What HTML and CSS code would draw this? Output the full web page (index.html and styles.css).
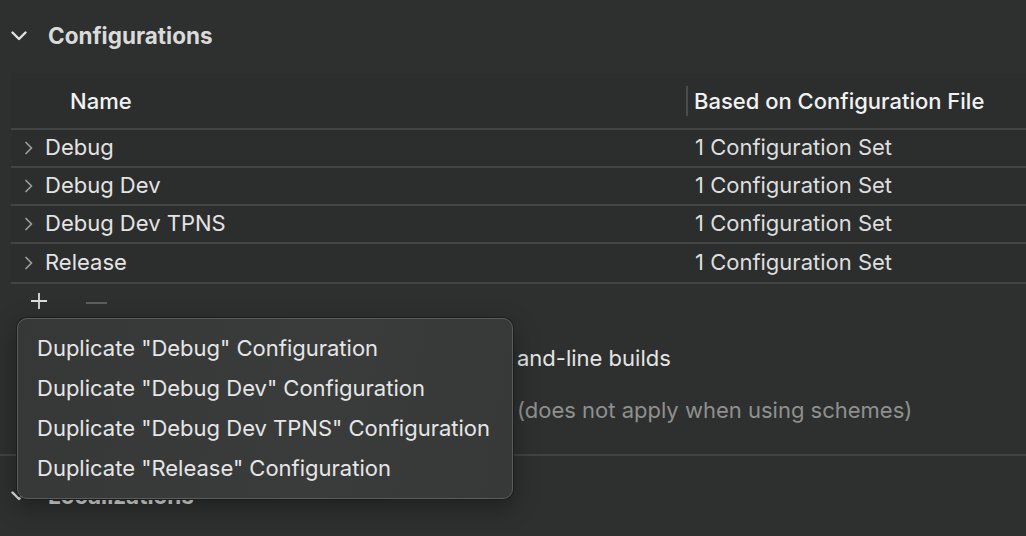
FILE: index.html
```html
<!DOCTYPE html>
<html lang="en">
<head>
    <meta charset="UTF-8">
    <meta name="viewport" content="width=device-width, initial-scale=1.0">
    <link rel="stylesheet" href="styles.css">
    <title>Project Info</title>
</head>
<body>
    <div class="panel">
        <div class="section-head">
            <svg class="disclosure" width="16" height="10" viewBox="0 0 16 10"><path d="M1.5 1.5 L8 8 L14.5 1.5" fill="none" stroke="#e2e2e2" stroke-width="2.4" stroke-linecap="round" stroke-linejoin="round"/></svg>
            <span class="section-title">Configurations</span>
        </div>

        <div class="config-table">
            <div class="table-head">
                <div class="col-name">Name</div>
                <div class="col-file">Based on Configuration File</div>
            </div>
            <div class="table-row">
                <div class="col-name"><svg class="chevron" width="10" height="14" viewBox="0 0 10 14"><path d="M2 1.5 L7.5 7 L2 12.5" fill="none" stroke="#9c9e9e" stroke-width="1.7" stroke-linecap="round" stroke-linejoin="round"/></svg>Debug</div>
                <div class="col-file">1 Configuration Set</div>
            </div>
            <div class="table-row">
                <div class="col-name"><svg class="chevron" width="10" height="14" viewBox="0 0 10 14"><path d="M2 1.5 L7.5 7 L2 12.5" fill="none" stroke="#9c9e9e" stroke-width="1.7" stroke-linecap="round" stroke-linejoin="round"/></svg>Debug Dev</div>
                <div class="col-file">1 Configuration Set</div>
            </div>
            <div class="table-row">
                <div class="col-name"><svg class="chevron" width="10" height="14" viewBox="0 0 10 14"><path d="M2 1.5 L7.5 7 L2 12.5" fill="none" stroke="#9c9e9e" stroke-width="1.7" stroke-linecap="round" stroke-linejoin="round"/></svg>Debug Dev TPNS</div>
                <div class="col-file">1 Configuration Set</div>
            </div>
            <div class="table-row last">
                <div class="col-name"><svg class="chevron" width="10" height="14" viewBox="0 0 10 14"><path d="M2 1.5 L7.5 7 L2 12.5" fill="none" stroke="#9c9e9e" stroke-width="1.7" stroke-linecap="round" stroke-linejoin="round"/></svg>Release</div>
                <div class="col-file">1 Configuration Set</div>
            </div>
        </div>

        <div class="table-tools">
            <svg class="tool" width="18" height="18" viewBox="0 0 18 18"><path d="M9 1 V17 M1 9 H17" stroke="#dcdcdc" stroke-width="1.8"/></svg>
            <svg class="tool minus" width="21" height="4" viewBox="0 0 21 4"><path d="M0 2 H21" stroke="#5c5e5e" stroke-width="2"/></svg>
        </div>

        <div class="options">
            <div class="option-line">and-line builds</div>
            <div class="option-line muted">(does not apply when using schemes)</div>
        </div>

        <div class="section-head second">
            <svg class="disclosure" width="16" height="10" viewBox="0 0 16 10"><path d="M1.5 1.5 L8 8 L14.5 1.5" fill="none" stroke="#e2e2e2" stroke-width="2.4" stroke-linecap="round" stroke-linejoin="round"/></svg>
            <span class="section-title">Localizations</span>
        </div>

        <div class="menu">
            <div class="menu-item">Duplicate "Debug" Configuration</div>
            <div class="menu-item">Duplicate "Debug Dev" Configuration</div>
            <div class="menu-item">Duplicate "Debug Dev TPNS" Configuration</div>
            <div class="menu-item">Duplicate "Release" Configuration</div>
        </div>
    </div>
</body>
</html>
```

FILE: styles.css
```css
body {
    margin: 0;
    background-color: #2e302f;
    font-family: Inter, "Noto Sans", sans-serif;
    color: #e4e4e4;
    overflow: hidden;
}

.panel {
    position: relative;
    width: 1026px;
    height: 536px;
}

.section-head {
    display: flex;
    align-items: center;
    height: 70px;
    padding-left: 11px;
}

.section-head.second {
    height: 78px;
    border-top: 2px solid #414343;
}

.disclosure {
    margin-top: 1px;
}

.section-title {
    margin-left: 21px;
    font-size: 22.5px;
    font-weight: 700;
    color: #dadada;
}

.config-table {
    margin-left: 11px;
    margin-top: 3px;
    background-color: #2c2e2d;
}

.table-head,
.table-row {
    display: grid;
    grid-template-columns: 675px 1fr;
    align-items: center;
    font-size: 22px;
}

.table-head {
    height: 55px;
    border-bottom: 2px solid #434545;
    color: #f2f2f2;
    font-weight: 500;
}

.table-head .col-name {
    padding-left: 59px;
}

.table-head .col-file {
    border-left: 2px solid #4a4c4c;
    padding-left: 6px;
    line-height: 30px;
}

.table-row {
    box-sizing: border-box;
    height: 38px;
    padding-bottom: 3px;
    border-bottom: 2px solid #434545;
}

.table-row.last {
    height: 40px;
}

.table-row .col-name {
    display: flex;
    align-items: center;
    padding-left: 13px;
}

.table-row .col-file {
    padding-left: 9px;
    color: #dedede;
}

.chevron {
    margin-right: 11px;
    margin-top: 2px;
}

.table-tools {
    display: flex;
    align-items: center;
    gap: 38px;
    height: 34px;
    padding-left: 30px;
}

.tool.minus {
    margin-top: 3px;
}

.options {
    box-sizing: border-box;
    height: 136px;
    padding: 14px 0 0 517px;
    font-size: 22px;
}

.option-line {
    height: 52px;
    display: flex;
    align-items: center;
}

.option-line.muted {
    color: #8e9090;
}

/* popup menu over the table */
.menu {
    position: absolute;
    left: 17px;
    top: 318px;
    width: 494px;
    padding: 9px 0 10px;
    border: 1px solid #5a5c5c;
    border-radius: 10px;
    background: linear-gradient(100deg, #363838, #3a3c3c 60%, #373939);
    box-shadow: 0 0 0 1px #1c1d1d, 0 8px 24px rgba(0, 0, 0, 0.35);
}

.menu-item {
    height: 40px;
    display: flex;
    align-items: center;
    padding-left: 19px;
    font-size: 22px;
    color: #e6e6e6;
}
```
